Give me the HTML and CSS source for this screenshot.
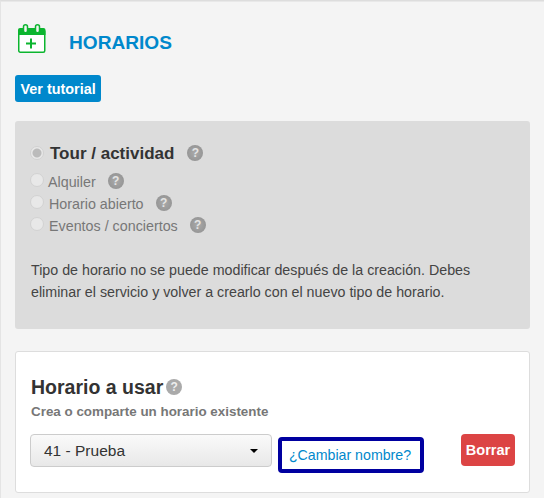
FILE: index.html
```html
<!DOCTYPE html>
<html lang="es">
<head>
<meta charset="utf-8">
<title>Horarios</title>
<link rel="stylesheet" href="styles.css">
</head>
<body>
<main class="panel">
  <header class="head">
    <svg class="cal" width="30" height="30" viewBox="0 0 30 30" aria-hidden="true">
      <rect x="1.750" y="6" width="26" height="22.250" rx="1.500" fill="#fff" stroke="#0cb52f" stroke-width="1.500"/>
      <path d="M1 11V6A2 2 0 0 1 3 4H26.500A2 2 0 0 1 28.500 6V11Z" fill="#0cb52f"/>
      <rect x="6.500" y="0.750" width="4" height="8" rx="2" fill="#f4f4f4" stroke="#0cb52f" stroke-width="1.500"/>
      <rect x="18.500" y="0.750" width="4" height="8" rx="2" fill="#f4f4f4" stroke="#0cb52f" stroke-width="1.500"/>
      <path d="M14 14.500v10M9 19.500h10" stroke="#0cb52f" stroke-width="2" fill="none"/>
    </svg>
    <h1 class="title">HORARIOS</h1>
  </header>
  <a class="tutorial" href="#">Ver tutorial</a>
  <section class="types">
    <div class="opt-main"><span class="radio radio-on"></span><strong class="txt">Tour / actividad</strong><span class="help help-main">?</span></div>
    <div class="opt"><span class="radio"></span><span class="lbl lbl-a txt">Alquiler</span><span class="help">?</span></div>
    <div class="opt"><span class="radio"></span><span class="lbl txt">Horario abierto</span><span class="help">?</span></div>
    <div class="opt"><span class="radio"></span><span class="lbl txt">Eventos / conciertos</span><span class="help">?</span></div>
    <p class="note">Tipo de horario no se puede modificar después de la creación. Debes eliminar el servicio y volver a crearlo con el nuevo tipo de horario.</p>
  </section>
  <section class="card">
    <h2 class="card-title">Horario a usar<span class="help help-title">?</span></h2>
    <p class="sub">Crea o comparte un horario existente</p>
    <div class="row">
      <div class="select">41 - Prueba<span class="caret"></span></div>
      <a class="rename" href="#">¿Cambiar nombre?</a>
      <button class="del" type="button">Borrar</button>
    </div>
  </section>
</main>
</body>
</html>
```

FILE: styles.css
```css
* { box-sizing: border-box; }
html, body { margin: 0; height: 100%; }
body {
  width: 544px;
  height: 498px;
  overflow: hidden;
  background: #f4f4f4;
  font-family: "Liberation Sans", Arial, sans-serif;
  color: #333;
}
.panel {
  height: 498px;
  padding: 0 14px 0 14px;
  border-top: 1px solid #ddd;
  border-left: 1px solid #e4e4e4;
  box-shadow: inset 0 1px 0 #e8e8e8;
}
.head {
  display: flex;
  height: 38px;
  margin-top: 22px;
}
.cal { display: block; flex: none; margin: 1px 0 0 2px; }
.title {
  margin: 9px 0 0 22px;
  font-size: 19.100px;
  line-height: 22px;
  font-weight: 700;
  color: #0088cc;
}
.tutorial {
  display: inline-block;
  margin-top: 14px;
  height: 27px;
  padding: 1px 5.500px 0;
  border-radius: 3px;
  background: #0088cc;
  color: #fff;
  font-size: 14.400px;
  font-weight: 700;
  line-height: 26px;
  text-decoration: none;
  vertical-align: top;
}
.types {
  margin-top: 19px;
  height: 208px;
  width: 515px;
  padding: 21px 15px 0 16px;
  background: #dcdcdc;
  border-radius: 3px;
}
.opt-main { display: flex; align-items: center; height: 22px; }
.opt-main strong { font-size: 17px; color: #333; margin-left: 6px; }
.opt { display: flex; align-items: center; height: 22px; font-size: 14.300px; color: #777; }
.opt .radio { margin-bottom: 2px; }
.opt-main + .opt { margin-top: 6px; }
.txt { margin-top: 2px; }
.radio {
  flex: none;
  width: 14px;
  height: 14px;
  margin-left: -1px;
  border-radius: 50%;
  background: #e8e8e8;
  border: 1px solid #d2d2d2;
}
.radio-on { background: radial-gradient(circle, #bbb 0 4px, #e8e8e8 5px); }
.lbl { margin-left: 5px; }
.lbl-a { margin-left: 4px; }
.help {
  flex: none;
  display: inline-block;
  width: 16px;
  height: 16px;
  margin-left: 12px;
  border-radius: 50%;
  background: radial-gradient(circle, #aaa, #8e8e8e);
  color: #e4e4e4;
  font-size: 12px;
  font-weight: 700;
  line-height: 16px;
  text-align: center;
}
.help-main { margin-left: 13px; }
.note {
  margin: 23px 0 0;
  font-size: 14.260px;
  line-height: 22px;
  color: #444;
}
.card {
  margin-top: 22px;
  width: 515px;
  height: 142px;
  padding: 24px 14px 0 14px;
  background: #fff;
  border: 1px solid #ddd;
  border-radius: 3px;
}
.card-title {
  margin: 0 0 0 1px;
  font-size: 19.500px;
  line-height: 22px;
  font-weight: 700;
  color: #333;
  display: flex;
  align-items: center;
}
.help-title { margin-left: 3px; background: #aaa; color: #eee; }
.sub {
  margin: 6px 0 0 1px;
  font-size: 13.400px;
  line-height: 16px;
  font-weight: 700;
  color: #777;
}
.row { display: flex; align-items: flex-start; margin-top: 14px; }
.select {
  position: relative;
  flex: none;
  width: 242px;
  height: 33px;
  padding: 1px 0 0 13px;
  border: 1px solid #ccc;
  border-radius: 4px;
  background: linear-gradient(#fafafa, #e8e8e8);
  font-size: 15.500px;
  line-height: 30px;
  color: #333;
}
.caret {
  position: absolute;
  right: 13px;
  top: 14px;
  border-left: 4px solid transparent;
  border-right: 4px solid transparent;
  border-top: 4px solid #000;
}
.rename {
  flex: none;
  margin: 3px 0 0 6px;
  width: 146px;
  height: 36px;
  padding: 1px 2px 0 0;
  border: 4px solid #0000a0;
  border-radius: 4px;
  background: #fff;
  color: #0088cc;
  font-size: 14.200px;
  line-height: 27px;
  text-align: center;
  text-decoration: none;
}
.del {
  flex: none;
  margin: 0 0 0 37px;
  width: 54px;
  height: 32px;
  padding: 0;
  border: 0;
  border-radius: 4px;
  background: #dc4444;
  color: #fff;
  font-family: inherit;
  font-size: 14.500px;
  font-weight: 700;
}
```
